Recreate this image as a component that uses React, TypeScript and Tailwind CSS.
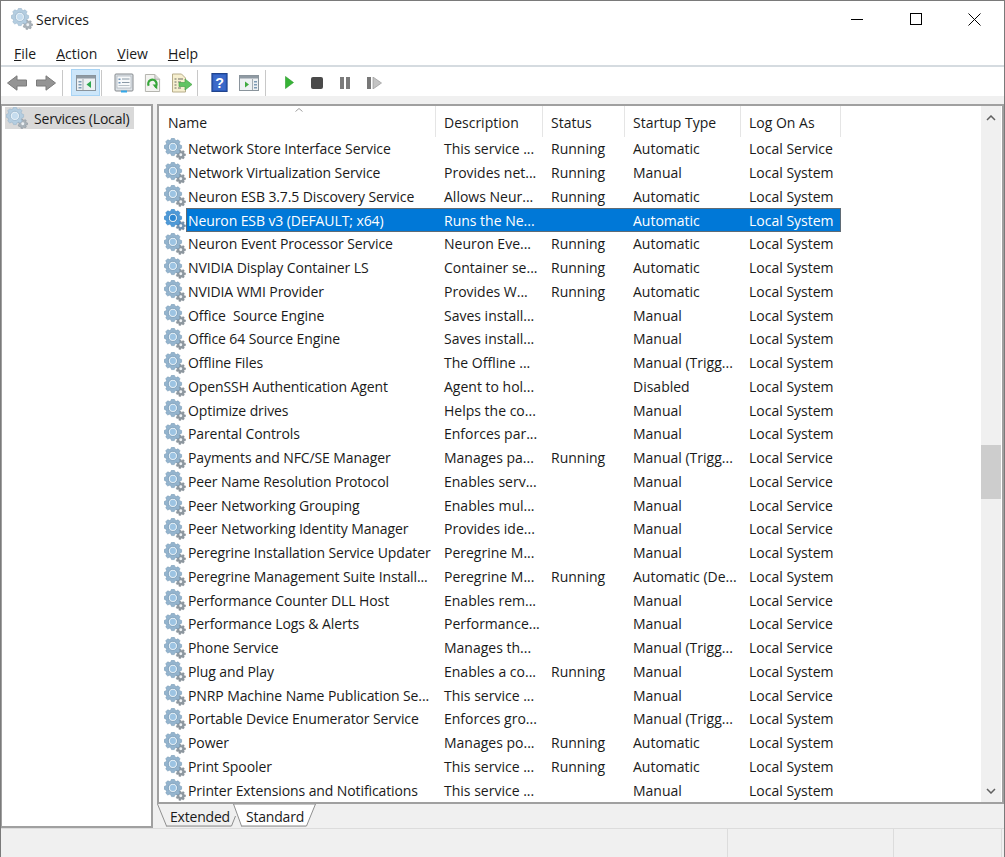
import type { ReactNode } from "react";

type Row = [string, string, string, string, string];

const rows: Row[] = [
  ["Network Store Interface Service", "This service ...", "Running", "Automatic", "Local Service"],
  ["Network Virtualization Service", "Provides net...", "Running", "Manual", "Local System"],
  ["Neuron ESB 3.7.5 Discovery Service", "Allows Neur...", "Running", "Automatic", "Local System"],
  ["Neuron ESB v3 (DEFAULT; x64)", "Runs the Ne...", "", "Automatic", "Local System"],
  ["Neuron Event Processor Service", "Neuron Eve...", "Running", "Automatic", "Local System"],
  ["NVIDIA Display Container LS", "Container se...", "Running", "Automatic", "Local System"],
  ["NVIDIA WMI Provider", "Provides W...", "Running", "Automatic", "Local System"],
  ["Office  Source Engine", "Saves install...", "", "Manual", "Local System"],
  ["Office 64 Source Engine", "Saves install...", "", "Manual", "Local System"],
  ["Offline Files", "The Offline ...", "", "Manual (Trigg...", "Local System"],
  ["OpenSSH Authentication Agent", "Agent to hol...", "", "Disabled", "Local System"],
  ["Optimize drives", "Helps the co...", "", "Manual", "Local System"],
  ["Parental Controls", "Enforces par...", "", "Manual", "Local System"],
  ["Payments and NFC/SE Manager", "Manages pa...", "Running", "Manual (Trigg...", "Local Service"],
  ["Peer Name Resolution Protocol", "Enables serv...", "", "Manual", "Local Service"],
  ["Peer Networking Grouping", "Enables mul...", "", "Manual", "Local Service"],
  ["Peer Networking Identity Manager", "Provides ide...", "", "Manual", "Local Service"],
  ["Peregrine Installation Service Updater", "Peregrine M...", "", "Manual", "Local System"],
  ["Peregrine Management Suite Install...", "Peregrine M...", "Running", "Automatic (De...", "Local System"],
  ["Performance Counter DLL Host", "Enables rem...", "", "Manual", "Local Service"],
  ["Performance Logs & Alerts", "Performance...", "", "Manual", "Local Service"],
  ["Phone Service", "Manages th...", "", "Manual (Trigg...", "Local Service"],
  ["Plug and Play", "Enables a co...", "Running", "Manual", "Local System"],
  ["PNRP Machine Name Publication Se...", "This service ...", "", "Manual", "Local Service"],
  ["Portable Device Enumerator Service", "Enforces gro...", "", "Manual (Trigg...", "Local System"],
  ["Power", "Manages po...", "Running", "Automatic", "Local System"],
  ["Print Spooler", "This service ...", "Running", "Automatic", "Local System"],
  ["Printer Extensions and Notifications", "This service ...", "", "Manual", "Local System"],
];

function gearPath(cx: number, cy: number, outer: number, inner: number, teeth: number) {
  const pts: string[] = [];
  const step = (Math.PI * 2) / teeth;
  for (let i = 0; i < teeth; i++) {
    const a = i * step;
    const offsets: [number, number][] = [
      [-0.36, inner],
      [-0.2, outer],
      [0.2, outer],
      [0.36, inner],
    ];
    for (const [o, r] of offsets) {
      const t = a + o * step;
      pts.push(`${(cx + Math.cos(t) * r).toFixed(2)} ${(cy + Math.sin(t) * r).toFixed(2)}`);
    }
  }
  return `M${pts.join("L")}Z`;
}

const bigGear = gearPath(8.5, 8.5, 8.4, 6.9, 8);
const smallGear = gearPath(16, 16, 4.6, 3.4, 7);

function GearIcon({ selected = false, muted = false }: { selected?: boolean; muted?: boolean }) {
  const body = selected ? "#4f9ad8" : muted ? "#b4cde0" : "#94b4ce";
  const edge = selected ? "#2b78bb" : muted ? "#93b0c7" : "#6f93b0";
  const center = selected ? "#2a86d2" : muted ? "#c5dcee" : "#9cc3e2";
  const small = selected ? "#6d8fb0" : muted ? "#aab3ba" : "#8d979f";
  return (
    <svg width="22" height="22" viewBox="0 0 21 21" className="shrink-0">
      <path d={smallGear} fill={small} stroke="#78838b" strokeWidth="0.4" />
      <circle cx="16" cy="16" r="1.4" fill="#eef2f5" />
      <path d={bigGear} fill={body} stroke={edge} strokeWidth="0.5" />
      <circle cx="8.5" cy="8.5" r="4.4" fill="#e6f0f7" stroke={edge} strokeWidth="0.7" />
      <circle cx="8.5" cy="8.5" r="2.9" fill={center} />
    </svg>
  );
}

function ToolBtn({ children, className = "w-[29px]", active = false }: { children: ReactNode; className?: string; active?: boolean }) {
  return (
    <div
      className={`flex h-[27px] items-center justify-center border ${className} ${
        active ? "border-[#a8d4f5] bg-[#cde6f9]" : "border-transparent"
      }`}
    >
      {children}
    </div>
  );
}

function Sep({ className }: { className: string }) {
  return <div className={`h-[26px] w-px bg-[#c8c8c8] ${className}`} />;
}

function ArrowIcon({ right = false }: { right?: boolean }) {
  return (
    <svg width="20" height="16" viewBox="0 0 20 16">
      <path
        d={right ? "M0.5 5h9.5V0.8L19.5 8 10 15.2V11H0.5z" : "M19.5 5H10V0.8L0.5 8 10 15.2V11h9.5z"}
        fill="#949494"
        stroke="#7b7b7b"
        strokeWidth="1"
      />
    </svg>
  );
}

function PaneIcon({ flip = false }: { flip?: boolean }) {
  return (
    <svg width="20" height="16" viewBox="0 0 20 16">
      <rect x="0.5" y="0.5" width="19" height="15" fill="#eef1f3" stroke="#8a949c" />
      <rect x="1" y="1" width="18" height="2.5" fill="#8f9aa3" />
      <rect x={flip ? 13 : 6.5} y="4" width="1" height="11" fill="#a3acb3" />
      {flip ? (
        <path d="M6 6.5l4 3-4 3z" fill="#3faa3f" />
      ) : (
        <path d="M15 6l-4.5 3.5 4.5 3.5z" fill="#2fa84f" />
      )}
      <rect x={flip ? 15 : 2.5} y="6" width="3" height="1.5" fill="#7c9ab5" />
      <rect x={flip ? 15 : 2.5} y="9" width="3" height="1.5" fill="#7c9ab5" />
      <rect x={flip ? 15 : 2.5} y="12" width="3" height="1.5" fill="#7c9ab5" />
    </svg>
  );
}

function PropsIcon() {
  return (
    <svg width="20" height="20" viewBox="0 0 20 20">
      <rect x="1" y="1" width="18" height="17" rx="1" fill="#dfe4e8" stroke="#85898d" />
      <rect x="3" y="3" width="14" height="12" fill="#f7f9fa" stroke="#a7b0b7" strokeWidth="0.7" />
      <rect x="4.5" y="5.5" width="2" height="1.5" fill="#6f94b8" />
      <rect x="4.5" y="9" width="2" height="1.5" fill="#6f94b8" />
      <rect x="8" y="5.5" width="7.5" height="1" fill="#8a99a6" />
      <rect x="8" y="9" width="7.5" height="1" fill="#8a99a6" />
      <rect x="4.5" y="12" width="11" height="1" fill="#b7c0c7" />
      <rect x="7" y="17.5" width="6" height="2" fill="#33a7e8" />
    </svg>
  );
}

function RefreshIcon() {
  return (
    <svg width="17" height="20" viewBox="0 0 18 20">
      <path d="M1.5 1h10l5 5v13h-15z" fill="#f3f3f0" stroke="#b0b0aa" />
      <path d="M11.5 1v5h5" fill="#ddd" stroke="#b0b0aa" />
      <path d="M5 13a4.4 4.4 0 1 1 6.5 1.5" fill="none" stroke="#37a63a" strokeWidth="2.4" />
      <path d="M9 11.5h5v5.5z" fill="#37a63a" />
    </svg>
  );
}

function ExportIcon() {
  return (
    <svg width="22" height="20" viewBox="0 0 22 20">
      <path d="M1.5 1h9l4 4v14h-13z" fill="#f6efcf" stroke="#b7ad8a" />
      <path d="M3.5 6h2M7 6h5M3.5 9h2M7 9h3M3.5 12h2M3.5 15h2M7 15h3" stroke="#6d6d66" strokeWidth="1" />
      <path d="M8 9.5h6V6l7 5.5-7 5.5v-3.5H8z" fill="#62c462" stroke="#4aa34a" strokeWidth="0.7" />
    </svg>
  );
}

function HelpIcon() {
  return (
    <svg width="17" height="19" viewBox="0 0 17 20">
      <rect x="0.5" y="0.5" width="16" height="19" fill="#2a58b8" stroke="#1c3f88" />
      <rect x="2" y="2" width="13" height="16" fill="#3b69c9" />
      <text x="8.5" y="15.5" textAnchor="middle" fill="#fff" fontSize="15" fontWeight="700" fontFamily="Liberation Sans, sans-serif">
        ?
      </text>
    </svg>
  );
}

function PlayIcon() {
  return (
    <svg width="9" height="13" viewBox="0 0 9 13">
      <path d="M0.5 0.5l8 6-8 6z" fill="#36b336" stroke="#2b9a2b" strokeWidth="0.6" />
    </svg>
  );
}

function StopIcon() {
  return <div className="h-3 w-3 rounded-[2px] bg-[#4a4a4a]" />;
}

function PauseIcon() {
  return (
    <div className="flex gap-[2px]">
      <div className="h-3 w-1 bg-[#7a7a7a]" />
      <div className="h-3 w-1 bg-[#7a7a7a]" />
    </div>
  );
}

function ResumeIcon() {
  return (
    <svg width="15" height="12" viewBox="0 0 15 12">
      <rect x="0" y="0" width="4" height="12" fill="#777" />
      <path d="M6 0l8.5 6L6 12z" fill="#c4c4c4" stroke="#999" strokeWidth="0.7" />
    </svg>
  );
}

function Chevron({ down = false }: { down?: boolean }) {
  return (
    <svg width="10" height="6" viewBox="0 0 10 6">
      <path d={down ? "M1 1l4 4 4-4" : "M1 5l4-4 4 4"} fill="none" stroke="#606060" strokeWidth="1.5" />
    </svg>
  );
}

function ColHead({ label, width, pad = "pl-2" }: { label: string; width: string; pad?: string }) {
  return (
    <div className={`flex h-full items-center border-r border-[#e5e5e5] ${pad} ${width}`}>
      <span className="pt-px">{label}</span>
    </div>
  );
}

function ServiceRow({ row, selected }: { row: Row; selected: boolean }) {
  const cell = "overflow-hidden whitespace-pre";
  return (
    <div className="flex h-[23.76px] items-center">
      <div className="flex h-full w-[27px] shrink-0 items-center pl-[5px]">
        <GearIcon selected={selected} />
      </div>
      <div
        className={`flex h-full items-center ${
          selected ? "bg-[#0078d7] text-white outline outline-1 -outline-offset-1 outline-[#5f6b75]" : "text-[#1a1a1a]"
        }`}
      >
        <div className={`w-[250px] pl-[2px] tracking-[-0.1px] ${cell}`}>{row[0]}</div>
        <div className={`w-[107px] pl-2 ${cell}`}>{row[1]}</div>
        <div className={`w-[82px] pl-2 ${cell}`}>{row[2]}</div>
        <div className={`w-[116px] pl-2 ${cell}`}>{row[3]}</div>
        <div className={`w-[100px] pl-2 ${cell}`}>{row[4]}</div>
      </div>
    </div>
  );
}

export default function App() {
  return (
    <div className="flex h-[857px] w-[1005px] flex-col overflow-hidden border-x border-t border-[#7a7a7a] bg-white font-['Open_Sans','Noto_Sans',sans-serif] text-[14px] text-[#1a1a1a]">
      {/* title bar */}
      <div className="flex h-[36px] shrink-0 items-center">
        <div className="flex flex-1 items-center pl-[10px]">
          <GearIcon muted />
          <span className="pl-[3px]">Services</span>
        </div>
        <div className="flex items-center">
          <div className="flex w-[58px] justify-center">
            <div className="h-px w-3 bg-black" />
          </div>
          <div className="flex w-[59px] justify-center">
            <div className="h-3 w-3 border border-black" />
          </div>
          <div className="flex w-[59px] justify-center">
            <svg width="13" height="13" viewBox="0 0 13 13">
              <path d="M0.5 0.5l12 12M12.5 0.5l-12 12" stroke="#000" strokeWidth="1" />
            </svg>
          </div>
        </div>
      </div>

      {/* menu */}
      <div className="flex h-[30px] shrink-0 items-center gap-[20px] border-b-2 border-[#d5dbe0] pl-[13px] pt-[4px]">
        <span><span className="underline">F</span>ile</span>
        <span><span className="underline">A</span>ction</span>
        <span><span className="underline">V</span>iew</span>
        <span><span className="underline">H</span>elp</span>
      </div>

      {/* toolbar */}
      <div className="flex h-[29px] shrink-0 items-center pl-[2px] pt-[2px]">
        <div className="flex w-[28px] justify-center"><ArrowIcon /></div>
        <div className="flex w-[29px] justify-center"><ArrowIcon right /></div>
        <Sep className="ml-[2px]" />
        <ToolBtn active className="ml-[8px] w-[29px]"><PaneIcon /></ToolBtn>
        <Sep className="ml-px" />
        <ToolBtn className="ml-[7px] w-[29px]"><PropsIcon /></ToolBtn>
        <ToolBtn><RefreshIcon /></ToolBtn>
        <ToolBtn><ExportIcon /></ToolBtn>
        <Sep className="ml-px" />
        <ToolBtn className="ml-[7px] w-[29px]"><HelpIcon /></ToolBtn>
        <ToolBtn><PaneIcon flip /></ToolBtn>
        <Sep className="ml-[2px]" />
        <ToolBtn className="ml-[10px] w-[27px]"><PlayIcon /></ToolBtn>
        <ToolBtn className="w-[27px]"><StopIcon /></ToolBtn>
        <ToolBtn className="w-[30px]"><PauseIcon /></ToolBtn>
        <ToolBtn className="w-[29px]"><ResumeIcon /></ToolBtn>
      </div>

      {/* panes */}
      <div className="flex min-h-0 flex-1 flex-col bg-[#f0f0f0]">
        <div className="flex min-h-0 flex-1 pt-2">
          <div className="w-[152px] shrink-0 border-y-2 border-r-2 border-l border-[#a0a0a0] bg-white pl-[3px] pt-px">
            <div className="flex h-[22px] w-[129px] items-center bg-[#d9d9d9] pl-px">
              <GearIcon muted />
              <span className="pl-[6px] tracking-[-0.2px]">Services (Local)</span>
            </div>
          </div>

          <div className="ml-[4px] flex min-w-0 flex-1 flex-col">
            <div className="flex min-h-0 flex-1 border-2 border-[#a0a0a0] bg-white">
              <div className="relative min-w-0 flex-1">
                <div className="flex h-[31px] items-center">
                  <ColHead label="Name" width="w-[277px]" pad="pl-[9px]" />
                  <ColHead label="Description" width="w-[107px]" />
                  <ColHead label="Status" width="w-[82px]" />
                  <ColHead label="Startup Type" width="w-[116px]" />
                  <ColHead label="Log On As" width="w-[100px]" />
                </div>
                <div className="absolute left-[136px] top-[2px]">
                  <svg width="8" height="4" viewBox="0 0 8 4">
                    <path d="M0.5 3.5L4 0.5l3.5 3" fill="none" stroke="#a0a0a0" />
                  </svg>
                </div>
                {rows.map((row, i) => (
                  <ServiceRow key={row[0]} row={row} selected={i === 3} />
                ))}
              </div>

              {/* scrollbar */}
              <div className="mr-px flex w-[20px] shrink-0 flex-col bg-[#f0f0f0]">
                <div className="flex h-[23px] items-center justify-center"><Chevron /></div>
                <div className="flex-1 pt-[316px]">
                  <div className="h-[54px] bg-[#cdcdcd]" />
                </div>
                <div className="flex h-[23px] items-center justify-center"><Chevron down /></div>
              </div>
            </div>

            {/* tabs */}
            <div className="flex h-[24px] shrink-0 items-start tracking-[-0.2px]">
              <svg width="160" height="24" viewBox="0 0 160 24" className="shrink-0">
                <path d="M0.5 0l9 22h65l4-10" fill="none" stroke="#8f8f8f" />
                <path d="M76.5 0l8 22h65l9-22z" fill="#fff" stroke="#8f8f8f" />
                <path d="M9 22.5h65M84 22.5h65" stroke="#b5b5b5" />
                <foreignObject x="8" y="2" width="70" height="22">
                  <span className="block text-center leading-[22px]">Extended</span>
                </foreignObject>
                <foreignObject x="83" y="2" width="70" height="22">
                  <span className="block text-center leading-[22px]">Standard</span>
                </foreignObject>
              </svg>
            </div>
          </div>
        </div>

        {/* status bar */}
        <div className="flex h-[29px] shrink-0 border-t border-[#dcdcdc]">
          <div className="w-[727px] border-r border-[#dcdcdc]" />
          <div className="w-[166px] border-r border-[#dcdcdc]" />
          <div className="w-[108px] border-r border-[#dcdcdc]" />
        </div>
      </div>
    </div>
  );
}
